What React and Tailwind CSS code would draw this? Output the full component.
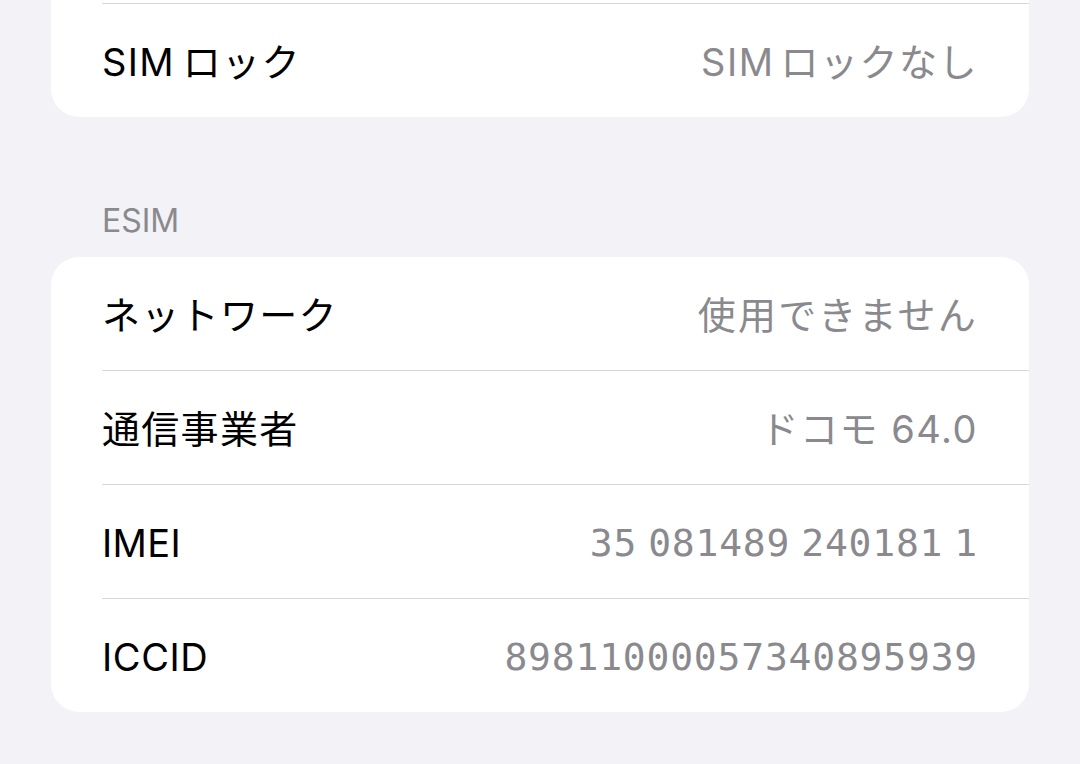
const sans = '"Inter", "Noto Sans CJK JP", sans-serif';
const mono = '"DejaVu Sans Mono", "Noto Sans CJK JP", monospace';

function Row({ label, value, numeric }) {
  return (
    <div className="flex items-center justify-between h-[113px] pt-[4px]">
      <span className="text-[38px] text-black tracking-[1.3px]">{label}</span>
      <span
        className="text-[38px] text-[#8a8a8e] flex gap-[11px] tracking-[1.5px] -mr-[1px]"
        style={numeric ? { fontFamily: mono, letterSpacing: '0.8px' } : undefined}
      >
        {Array.isArray(value) ? value.map((v, i) => <span key={i}>{v}</span>) : value}
      </span>
    </div>
  );
}

export default function App() {
  const esim = [
    { label: 'ネットワーク', value: <span className="tracking-[2.2px]">使用できません</span>, key: 'net' },
    { label: '通信事業者', value: 'ドコモ 64.0' },
    { label: <span className="tracking-[0.4px]">IMEI</span>, key: 'imei', value: ['35', '081489', '240181', '1'], numeric: true },
    { label: <span className="tracking-[0.6px]">ICCID</span>, key: 'iccid', value: '89811000057340895939', numeric: true },
  ];

  return (
    <div className="w-[1080px] h-[764px] overflow-hidden bg-[#f2f2f7]" style={{ fontFamily: sans }}>
      <div className="mx-[51px] -mt-[110px] bg-white rounded-[28px] pl-[51px]">
        <div className="pr-[52px]">
          <Row label="" value="" />
        </div>
        <div className="border-t border-[#d8d8dc] pr-[52px]">
          <Row
            label={<span>SIM<span className="ml-[8px]">ロック</span></span>}
            value={<span>SIM<span className="ml-[6px]">ロックなし</span></span>}
          />
        </div>
      </div>

      <div className="pt-[85px] pb-[17px] px-[102px] text-[32px] leading-[38px] text-[#8a8a8e]">ESIM</div>

      <div className="mx-[51px] bg-white rounded-[28px] pl-[51px]">
        {esim.map((r, i) => (
          <div key={r.key || r.label} className={i === 0 ? 'pr-[52px]' : 'border-t border-[#d8d8dc] pr-[52px]'}>
            <Row label={r.label} value={r.value} numeric={r.numeric} />
          </div>
        ))}
      </div>
    </div>
  );
}
